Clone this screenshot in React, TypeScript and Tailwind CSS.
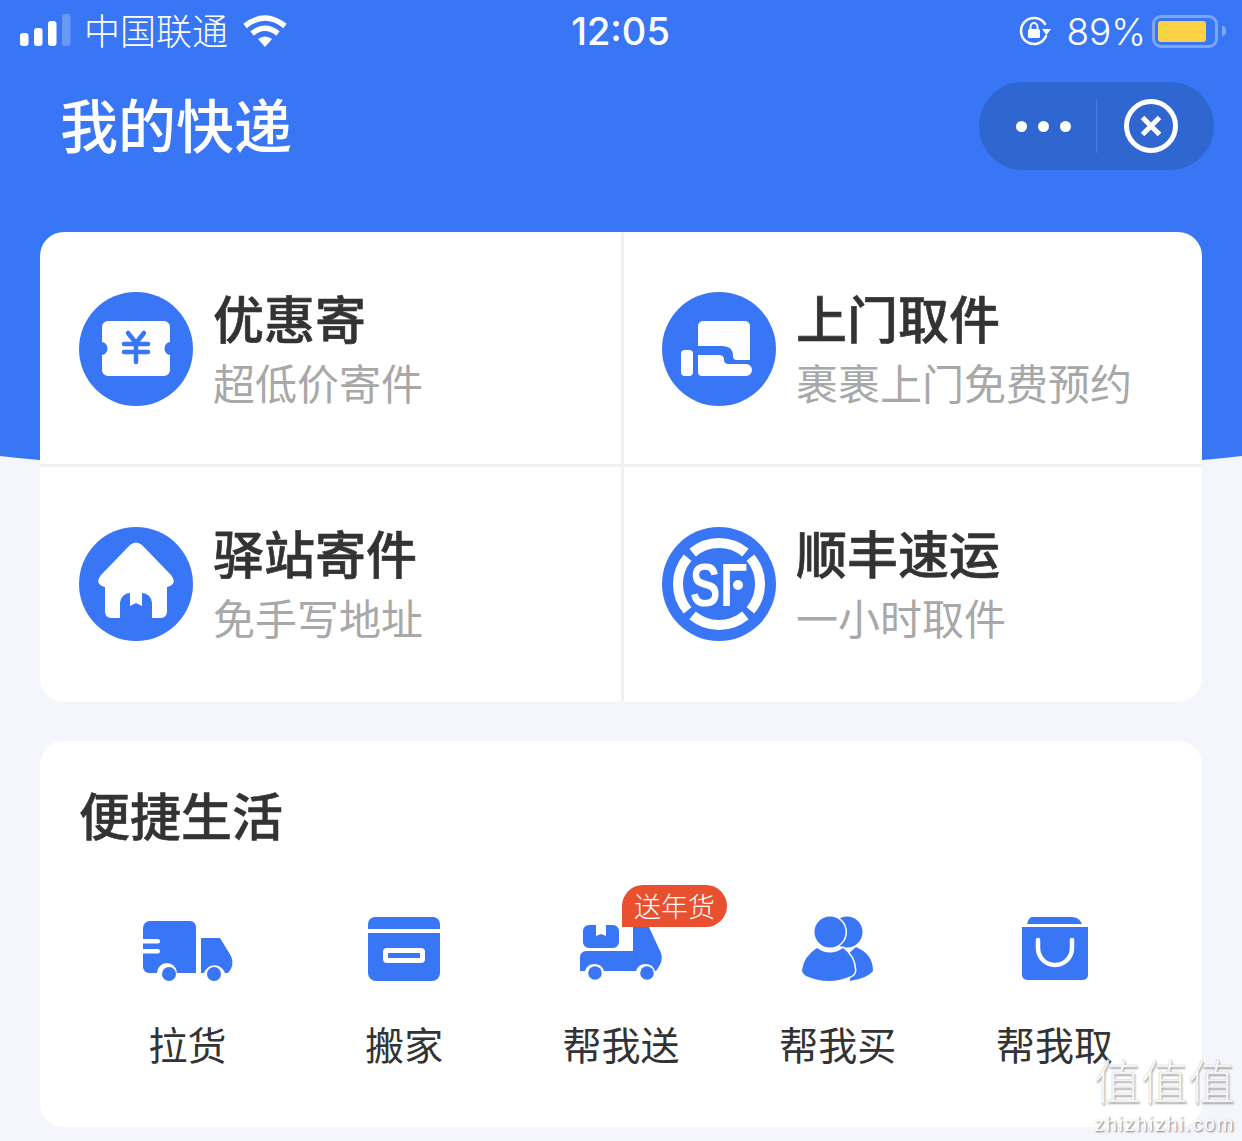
import type { ReactNode } from 'react'

const BLUE = '#3976f5'

function CircleIcon({ children }: { children: ReactNode }) {
  return (
    <svg width="114" height="114" viewBox="0 0 114 114" className="shrink-0">
      <circle cx="57" cy="57" r="57" fill={BLUE} />
      {children}
    </svg>
  )
}

function TicketIcon() {
  return (
    <CircleIcon>
      <path
        d="M29 29H85a6 6 0 0 1 6 6V50a5.500 6.500 0 0 0 0 13V78a6 6 0 0 1-6 6H29a6 6 0 0 1-6-6V63a5.500 6.500 0 0 0 0-13V35a6 6 0 0 1 6-6Z"
        fill="#fff"
      />
      <path
        d="M49 41L57 51L65 41M45 52H69M45 60H69M57 51V70"
        fill="none"
        stroke={BLUE}
        strokeWidth="4.500"
        strokeLinecap="round"
        strokeLinejoin="round"
      />
    </CircleIcon>
  )
}

function ParcelIcon() {
  return (
    <CircleIcon>
      <rect x="19" y="58" width="12" height="26" rx="4" fill="#fff" />
      <path d="M41 29H83a5 5 0 0 1 5 5V68H75Q71 68 71 64Q71 54 60 54H36V34a5 5 0 0 1 5-5Z" fill="#fff" />
      <path d="M36 63H57Q62 63 62 68Q62 72 67 72H84a6 6 0 0 1 0 12H40a4 4 0 0 1-4-4Z" fill="#fff" />
    </CircleIcon>
  )
}

function HouseIcon() {
  return (
    <CircleIcon>
      <path
        d="M51 18Q57 13 63 18L92 48Q99 57 88 60V85a6 6 0 0 1-6 6H73V76a10 10 0 0 0-10-10V79L57 76L51 79V66a10 10 0 0 0-10 10V91H32a6 6 0 0 1-6-6V60Q15 57 22 48Z"
        fill="#fff"
      />
    </CircleIcon>
  )
}

function SfIcon() {
  return (
    <CircleIcon>
      <g fill="none" stroke="#fff" strokeWidth="10">
        <path d="M30.600 25.600A41 41 0 0 1 83.400 25.600" />
        <path d="M88.400 30.600A41 41 0 0 1 88.400 83.400" />
        <path d="M83.400 88.400A41 41 0 0 1 30.600 88.400" />
        <path d="M25.600 83.400A41 41 0 0 1 25.600 30.600" />
      </g>
      <text
        x="28"
        y="79"
        fill="#fff"
        fontSize="62"
        fontWeight="700"
        fontFamily="'Liberation Sans', sans-serif"
        textLength="58"
        lengthAdjust="spacingAndGlyphs"
      >
        SF
      </text>
      <rect x="68" y="46" width="20" height="24" fill={BLUE} />
      <circle cx="76" cy="58" r="5" fill="#fff" />
    </CircleIcon>
  )
}

function TruckIcon() {
  return (
    <svg width="92" height="62" viewBox="0 0 92 62" className="mt-[6px] ml-[4px]">
      <path d="M7 0H47a6 6 0 0 1 6 6V52H34a10 10 0 0 0-20 0H6a6 6 0 0 1-6-6V7a7 7 0 0 1 7-7Z" fill={BLUE} />
      <rect x="-3" y="18" width="20" height="4.500" rx="2.200" fill="#fff" />
      <rect x="-3" y="28" width="20" height="4.500" rx="2.200" fill="#fff" />
      <path d="M58 17H77L88 35Q92 45 85 52H82a11 11 0 0 0-21 0H58Z" fill={BLUE} />
      <circle cx="26" cy="53" r="7" fill={BLUE} />
      <circle cx="71" cy="53" r="7" fill={BLUE} />
    </svg>
  )
}

function BoxIcon() {
  return (
    <svg width="72" height="64" viewBox="0 0 72 64">
      <path d="M7 0H65a7 7 0 0 1 7 7V12H0V7a7 7 0 0 1 7-7Z" fill={BLUE} />
      <path d="M0 16H72V56a8 8 0 0 1-8 8H8a8 8 0 0 1-8-8Z" fill={BLUE} />
      <rect x="17.500" y="33.500" width="37" height="10" rx="1.500" fill="none" stroke="#fff" strokeWidth="5" />
    </svg>
  )
}

function DeliveryIcon() {
  return (
    <svg width="84" height="60" viewBox="0 -4 84 60" className="mt-[4px] ml-[2px]">
      <path d="M9 0H16V11L21 9L26 11V0H33a6 6 0 0 1 6 6V17a6 6 0 0 1-6 6H9a6 6 0 0 1-6-6V6a6 6 0 0 1 6-6Z" fill={BLUE} />
      <path d="M53 0H68L81 28Q84 36 76 46H75a10 10 0 0 0-19 0H24a10 10 0 0 0-19 0H0V32a6 6 0 0 1 6-6H53Z" fill={BLUE} />
      <circle cx="15" cy="48" r="6.800" fill={BLUE} />
      <circle cx="67" cy="48" r="6.800" fill={BLUE} />
    </svg>
  )
}

function PeopleIcon() {
  return (
    <svg width="72" height="66" viewBox="0 0 72 66">
      <circle cx="45" cy="16" r="15.500" fill={BLUE} />
      <path d="M54 31Q71 38 71 55Q66 62 48 65Q50 50 46 38Z" fill={BLUE} />
      <circle cx="28" cy="16" r="15.500" fill={BLUE} stroke="#fff" strokeWidth="3" paintOrder="stroke" />
      <path
        d="M15 32Q28 41 41 32Q52 40 53 54Q53 58 49 60Q27 70 4 60Q0 57 0 54Q2 40 15 32Z"
        fill={BLUE}
        stroke="#fff"
        strokeWidth="3"
        paintOrder="stroke"
      />
    </svg>
  )
}

function BagIcon() {
  return (
    <svg width="66" height="64" viewBox="0 0 66 64">
      <path d="M10 0H50Q57 0 60 7H5Q7 0 10 0Z" fill={BLUE} />
      <path d="M0 10H66V58a5 5 0 0 1-5 5H5a5 5 0 0 1-5-5Z" fill={BLUE} />
      <path d="M16 23V31A17 17 0 0 0 50 31V23" fill="none" stroke="#fff" strokeWidth="4.500" strokeLinecap="round" />
    </svg>
  )
}

function SignalIcon() {
  return (
    <svg width="51" height="32" viewBox="0 0 51 32" className="mb-[2px]">
      <rect x="0" y="19" width="8.500" height="13" rx="3" fill="#fff" />
      <rect x="14" y="14" width="8.500" height="18" rx="3" fill="#fff" />
      <rect x="28" y="7" width="8.500" height="25" rx="3" fill="#fff" />
      <rect x="42" y="0" width="8.500" height="32" rx="3" fill="#fff" fillOpacity="0.25" />
    </svg>
  )
}

function WifiIcon() {
  return (
    <svg width="46" height="32" viewBox="0 0 46 32">
      <g fill="none" stroke="#fff" strokeWidth="5.500">
        <path d="M3 11Q23 -5 43 11" />
        <path d="M10 18.500Q23 8 36 18.500" />
      </g>
      <path d="M16 24Q23 19 30 24L23 32Z" fill="#fff" />
    </svg>
  )
}

function LockRotateIcon() {
  return (
    <svg width="32" height="30" viewBox="0 0 32 30">
      <path d="M27 20A13 13 0 1 1 26 8" fill="none" stroke="#fff" strokeWidth="2.500" strokeLinecap="round" />
      <path d="M23 13H32L27.500 19Z" fill="#fff" />
      <rect x="9" y="13" width="12" height="9" rx="1.500" fill="#fff" />
      <path d="M11.500 13V10.500a3.500 3.500 0 0 1 7 0V13" fill="none" stroke="#fff" strokeWidth="1.800" />
    </svg>
  )
}

const services = [
  { title: '优惠寄', sub: '超低价寄件', icon: <TicketIcon /> },
  { title: '上门取件', sub: '裹裹上门免费预约', icon: <ParcelIcon /> },
  { title: '驿站寄件', sub: '免手写地址', icon: <HouseIcon /> },
  { title: '顺丰速运', sub: '一小时取件', icon: <SfIcon /> },
]

const lifeItems = [
  { label: '拉货', icon: <TruckIcon /> },
  { label: '搬家', icon: <BoxIcon /> },
  { label: '帮我送', icon: <DeliveryIcon />, badge: '送年货' },
  { label: '帮我买', icon: <PeopleIcon /> },
  { label: '帮我取', icon: <BagIcon /> },
]

export default function App() {
  return (
    <div className="relative h-[1141px] w-[1242px] overflow-hidden bg-[#f5f6fb] font-['Noto_Sans_CJK_SC','Noto_Sans',sans-serif]">
      {/* curved blue backdrop */}
      <div className="absolute -left-[300px] top-0 h-[484px] w-[1842px] rounded-b-[921px_107px] bg-[#3976f5]" />

      <div className="relative">
        {/* status bar */}
        <div className="flex h-[62px] items-center pr-[16px] pl-[20px] text-white">
          <div className="flex flex-1 items-center">
            <SignalIcon />
            <span className="mb-[4px] ml-[13px] text-[36px] leading-none font-light">中国联通</span>
            <span className="ml-[14px]">
              <WifiIcon />
            </span>
          </div>
          <span className="mr-[5px] font-['Inter',sans-serif] text-[38px] leading-none font-medium">12:05</span>
          <div className="flex flex-1 items-center justify-end">
            <LockRotateIcon />
            <span className="ml-[15px] font-['Inter',sans-serif] text-[37px] leading-none font-light">89%</span>
            <div className="ml-[6px] flex items-center">
              <div className="h-[33px] w-[66px] rounded-[9px] border-[3px] border-[#7ba6fb] p-[3px]">
                <div className="h-full w-[48px] rounded-[3px] bg-[#fbd146]" />
              </div>
              <div className="ml-[4px] h-[10px] w-[4px] rounded-r-full bg-[#7ba6fb]" />
            </div>
          </div>
        </div>

        {/* nav */}
        <div className="flex items-center justify-between pt-[20px] pr-[28px] pb-[62px] pl-[60px]">
          <h1 className="pb-[6px] text-[58px] leading-none font-medium text-white">我的快递</h1>
          <div className="flex h-[88px] w-[235px] items-center rounded-full bg-[#2f66d0]">
            <div className="flex w-[117px] items-center justify-center gap-[11px] pl-[12px]">
              <span className="size-[11px] rounded-full bg-white" />
              <span className="size-[11px] rounded-full bg-white" />
              <span className="size-[11px] rounded-full bg-white" />
            </div>
            <div className="h-[54px] w-px bg-[#4a7cdc]" />
            <div className="flex flex-1 items-center justify-center pr-[10px]">
              <svg width="54" height="54" viewBox="0 0 54 54">
                <circle cx="27" cy="27" r="24.500" fill="none" stroke="#fff" strokeWidth="5" />
                <path d="M18.500 18.500L35.500 35.500M35.500 18.500L18.500 35.500" stroke="#fff" strokeWidth="5" />
              </svg>
            </div>
          </div>
        </div>

        {/* service card */}
        <div className="mx-[40px] grid h-[470px] grid-cols-[584px_1fr] grid-rows-2 overflow-hidden rounded-[24px] bg-white">
          {services.map((s, i) => (
            <div
              key={s.title}
              className={`flex items-center gap-[20px] ${i % 2 === 0 ? 'border-r-[3px] border-[#f0f1f5] pl-[39px]' : 'pl-[38px]'} ${i < 2 ? 'border-b-[3px] border-[#f0f1f5] pt-[2px]' : 'pb-[1px]'}`}
            >
              {s.icon}
              <div>
                <div className="text-[51px] leading-[62px] font-medium text-[#333] [-webkit-text-stroke:0.6px_#333]">{s.title}</div>
                <div className="mt-[3px] text-[42px] leading-[62px] text-[#a8a8a8]">{s.sub}</div>
              </div>
            </div>
          ))}
        </div>

        {/* life card */}
        <div className="mx-[40px] mt-[39px] h-[386px] rounded-[24px] bg-white px-[39px] pt-[43px]">
          <h2 className="text-[51px] leading-[60px] font-medium text-[#333] [-webkit-text-stroke:0.5px_#333]">便捷生活</h2>
          <div className="mt-[70px] grid grid-cols-5">
            {lifeItems.map((item) => (
              <div key={item.label} className="flex flex-col items-center">
                <div className="relative flex h-[70px] items-center justify-center">
                  {item.icon}
                  {item.badge && (
                    <span className="absolute -top-[29px] left-[44px] rounded-t-[21px] rounded-br-[21px] bg-[#e8502f] px-[12px] text-[27px] leading-[42px] font-light whitespace-nowrap text-white">
                      {item.badge}
                    </span>
                  )}
                </div>
                <span className="mt-[34px] text-[39px] leading-[50px] text-[#333]">{item.label}</span>
              </div>
            ))}
          </div>
        </div>
      </div>

      {/* watermark */}
      <div className="absolute right-[7px] bottom-[5px] flex flex-col items-end">
        <span className="text-[47px] leading-[68px] font-light text-white [-webkit-text-stroke:0.5px_#d4d4d4] [text-shadow:1px_2px_2px_rgba(0,0,0,0.35)]">值值值</span>
        <span className="font-['Liberation_Sans',sans-serif] text-[20px] leading-[23px] tracking-[1.6px] text-white [text-shadow:1px_1px_2px_rgba(0,0,0,0.55)]">zhizhizhi.com</span>
      </div>
    </div>
  )
}
